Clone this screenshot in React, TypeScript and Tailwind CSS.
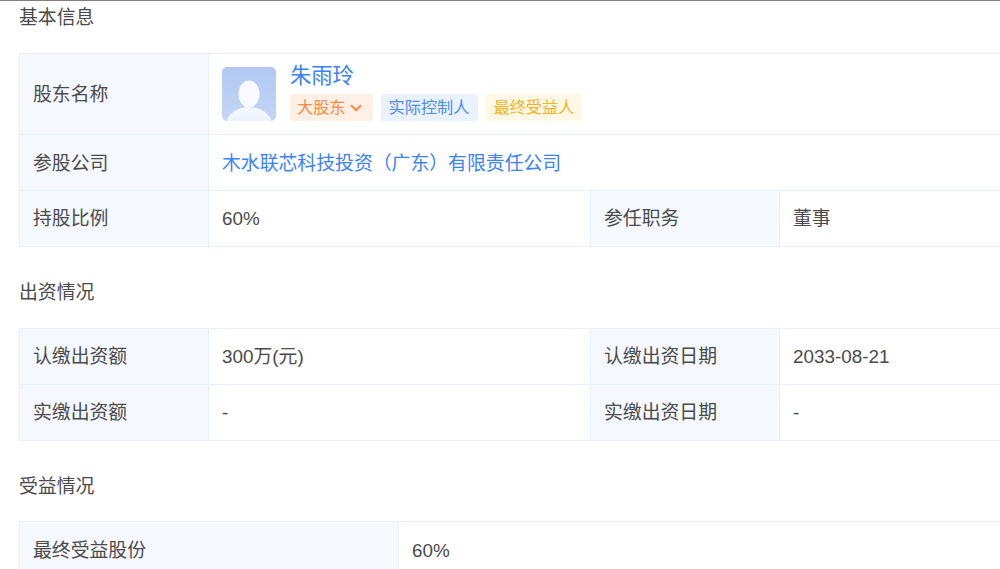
import { ChevronDown } from 'lucide-react'
import type { ReactNode } from 'react'

const font = '[font-family:"Liberation_Sans","Noto_Sans_CJK_SC",sans-serif]'

function Label({ children, className = '' }: { children: ReactNode; className?: string }) {
  return (
    <div className={`flex items-center bg-[#f5f9ff] pl-[13px] pt-[2px] border-r border-[#e8f0fb] ${className}`}>
      {children}
    </div>
  )
}

function Value({ children, className = '' }: { children: ReactNode; className?: string }) {
  return <div className={`flex items-center pl-[13px] pt-[2px] ${className}`}>{children}</div>
}

function Row({ children, className = 'h-[56px]' }: { children: ReactNode; className?: string }) {
  return <div className={`flex border-b border-[#e8f0fb] ${className}`}>{children}</div>
}

function Avatar() {
  return (
    <div className="w-[54px] h-[54px] rounded-[5px] overflow-hidden shrink-0">
      <svg width="54" height="54" viewBox="0 0 54 54">
        <defs>
          <linearGradient id="bg" x1="0" y1="0" x2="0" y2="1">
            <stop offset="0" stopColor="#b0c8f3" />
            <stop offset="1" stopColor="#c4d6f6" />
          </linearGradient>
          <linearGradient id="body" x1="0" y1="0" x2="0" y2="1">
            <stop offset="0" stopColor="#f4f7fd" />
            <stop offset="1" stopColor="#e6eefb" />
          </linearGradient>
        </defs>
        <rect width="54" height="54" fill="url(#bg)" />
        <ellipse cx="27" cy="27" rx="10.5" ry="13.5" fill="#f8faff" />
        <ellipse cx="27" cy="58" rx="23" ry="18" fill="url(#body)" />
      </svg>
    </div>
  )
}

function Tag({ children, className }: { children: ReactNode; className: string }) {
  return (
    <span className={`inline-flex items-center h-[27px] px-[8px] pt-[1px] rounded-[3px] text-[16.2px] ${className}`}>
      {children}
    </span>
  )
}

export default function App() {
  return (
    <div className={`w-[1000px] h-[569px] overflow-hidden bg-white text-[18.85px] text-[#4a4a4a] border-t border-[#808080] ${font}`}>
      <div className="pl-[19px]">
        <h2 className="h-[52px] pt-[4px] leading-[26px] font-normal">基本信息</h2>
        <div className="border-t border-l border-[#e8f0fb]">
          <Row className="h-[81px]">
            <Label className="w-[189px]">股东名称</Label>
            <Value className="flex-1 gap-[14px] !pt-0">
              <Avatar />
              <div className="flex flex-col gap-[4px] -mt-[5px]">
                <div className="text-[21.3px] leading-[27px] text-[#3b82f6]">朱雨玲</div>
                <div className="flex gap-[8px]">
                  <Tag className="bg-[#fff0e6] text-[#ff8a3d] !pl-[7px] !pr-[8px]">
                    大股东
                    <ChevronDown size={18} strokeWidth={2.6} className="ml-[1px]" />
                  </Tag>
                  <Tag className="bg-[#ebf2ff] text-[#4d8af0]">实际控制人</Tag>
                  <Tag className="bg-[#fff8e6] text-[#f5b324]">最终受益人</Tag>
                </div>
              </div>
            </Value>
          </Row>
          <Row>
            <Label className="w-[189px] !pt-[3px]">参股公司</Label>
            <Value className="flex-1 text-[#3b82f6] !pt-[3px]">木水联芯科技投资（广东）有限责任公司</Value>
          </Row>
          <Row>
            <Label className="w-[189px]">持股比例</Label>
            <Value className="w-[382px] border-r border-[#e8f0fb]">60%</Value>
            <Label className="w-[189px]">参任职务</Label>
            <Value className="flex-1">董事</Value>
          </Row>
        </div>
        <h2 className="h-[81px] pt-[33px] leading-[26px] font-normal">出资情况</h2>
        <div className="border-t border-l border-[#e8f0fb]">
          <Row>
            <Label className="w-[189px]">认缴出资额</Label>
            <Value className="w-[382px] border-r border-[#e8f0fb]">300万(元)</Value>
            <Label className="w-[189px]">认缴出资日期</Label>
            <Value className="flex-1">2033-08-21</Value>
          </Row>
          <Row>
            <Label className="w-[189px]">实缴出资额</Label>
            <Value className="w-[382px] border-r border-[#e8f0fb]">-</Value>
            <Label className="w-[189px]">实缴出资日期</Label>
            <Value className="flex-1">-</Value>
          </Row>
        </div>
        <h2 className="h-[80px] pt-[33px] leading-[26px] font-normal">受益情况</h2>
        <div className="border-t border-l border-[#e8f0fb]">
          <Row>
            <Label className="w-[379px] !pt-[3px]">最终受益股份</Label>
            <Value className="flex-1 !pt-[3px]">60%</Value>
          </Row>
        </div>
      </div>
    </div>
  )
}
